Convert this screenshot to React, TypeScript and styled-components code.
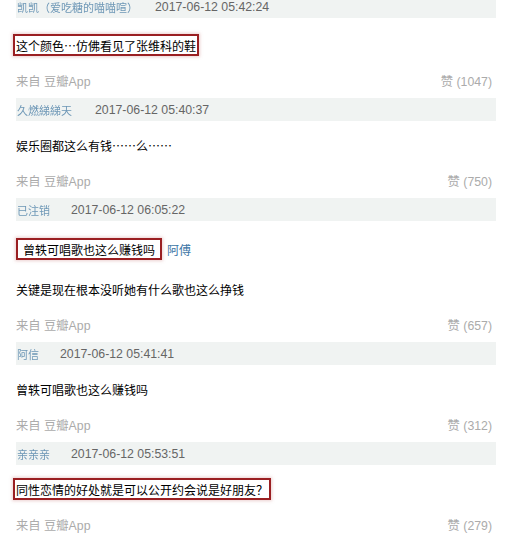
import React from "react";
import styled, { createGlobalStyle } from "styled-components";

const Global = createGlobalStyle`
  html, body { margin: 0; padding: 0; background: #fff; }
  body { width: 505px; height: 537px; overflow: hidden; font-family: "Liberation Sans", "Noto Sans CJK SC", sans-serif; }
`;

const Page = styled.div`
  display: flex;
  flex-direction: column;
  padding: 0 9px 0 16px;
`;

const Item = styled.div<{ $first?: boolean }>`
  display: flex;
  flex-direction: column;
  margin-top: ${(p) => (p.$first ? "-5px" : "0")};
  margin-bottom: 5px;
`;

const Header = styled.div`
  height: 23px;
  background: #f0f3f2;
  display: flex;
  align-items: center;
  gap: 14px;
  font-size: 12.3px;
`;

const Name = styled.span<{ $w: number }>`
  color: #4d80a8;
  font-family: "Noto Sans CJK SC", sans-serif;
  font-size: 11px;
  width: ${(p) => p.$w}px;
  white-space: nowrap;
  overflow: hidden;
  filter: blur(0.7px);
  opacity: 0.8;
  padding-left: 1px;
`;

const Time = styled.span`
  color: #666;
  font-family: "Liberation Sans", sans-serif;
`;

const Body = styled.div<{ $top: number }>`
  display: flex;
  flex-direction: column;
  gap: 16px;
  margin-top: ${(p) => p.$top}px;
`;

const Line = styled.div`
  height: 24px;
  display: flex;
  align-items: center;
  gap: 5px;
  font-family: "Noto Sans CJK SC", sans-serif;
  font-size: 12px;
  font-weight: 400;
  color: #000;
  white-space: nowrap;
`;

const Boxed = styled.span<{ $pad: number }>`
  display: inline-flex;
  align-items: center;
  height: 22px;
  box-sizing: border-box;
  margin-left: ${(p) => (p.$pad > 2 ? 0 : -3)}px;
  padding: 0 ${(p) => p.$pad}px;
  border: 2px solid #9a1f22;
  box-shadow: 0 0 3px 1px rgba(200, 120, 120, 0.35);
  color: #000;
`;

const Link = styled.span`
  color: #3d76a6;
`;

const Footer = styled.div`
  height: 24px;
  margin-top: 12px;
  display: flex;
  align-items: center;
  justify-content: space-between;
  font-family: "Liberation Sans", "Noto Sans CJK SC", sans-serif;
  font-size: 12.3px;
  color: #ababab;
  padding-right: 4px;
`;

type Entry = {
  name: string;
  nameW: number;
  time: string;
  lines: React.ReactNode[];
  likes: string;
  top: number;
};

const entries: Entry[] = [
  {
    name: "凯凯（爱吃糖的喵喵喧）",
    nameW: 124,
    time: "2017-06-12 05:42:24",
    lines: [<Boxed $pad={1}>这个颜色…仿佛看见了张维科的鞋</Boxed>],
    likes: "赞 (1047)",
    top: 15,
  },
  {
    name: "久燃綈綈天",
    nameW: 64,
    time: "2017-06-12 05:40:37",
    lines: ["娱乐圈都这么有钱……么……"],
    likes: "赞 (750)",
    top: 12,
  },
  {
    name: "已注销",
    nameW: 40,
    time: "2017-06-12 06:05:22",
    lines: [
      <>
        <Boxed $pad={5}>曾轶可唱歌也这么赚钱吗</Boxed>
        <Link>阿傅</Link>
      </>,
      "关键是现在根本没听她有什么歌也这么挣钱",
    ],
    likes: "赞 (657)",
    top: 16,
  },
  {
    name: "阿信",
    nameW: 29,
    time: "2017-06-12 05:41:41",
    lines: ["曾轶可唱歌也这么赚钱吗"],
    likes: "赞 (312)",
    top: 12,
  },
  {
    name: "亲亲亲",
    nameW: 40,
    time: "2017-06-12 05:53:51",
    lines: [<Boxed $pad={1}>同性恋情的好处就是可以公开约会说是好朋友？</Boxed>],
    likes: "赞 (279)",
    top: 12,
  },
];

export default function App() {
  return (
    <>
      <Global />
      <Page>
        {entries.map((e, i) => (
          <Item key={i} $first={i === 0}>
            <Header>
              <Name $w={e.nameW}>{e.name}</Name>
              <Time>{e.time}</Time>
            </Header>
            <Body $top={e.top}>
              {e.lines.map((l, j) => (
                <Line key={j}>{l}</Line>
              ))}
            </Body>
            <Footer>
              <span>来自 豆瓣App</span>
              <span>{e.likes}</span>
            </Footer>
          </Item>
        ))}
      </Page>
    </>
  );
}
